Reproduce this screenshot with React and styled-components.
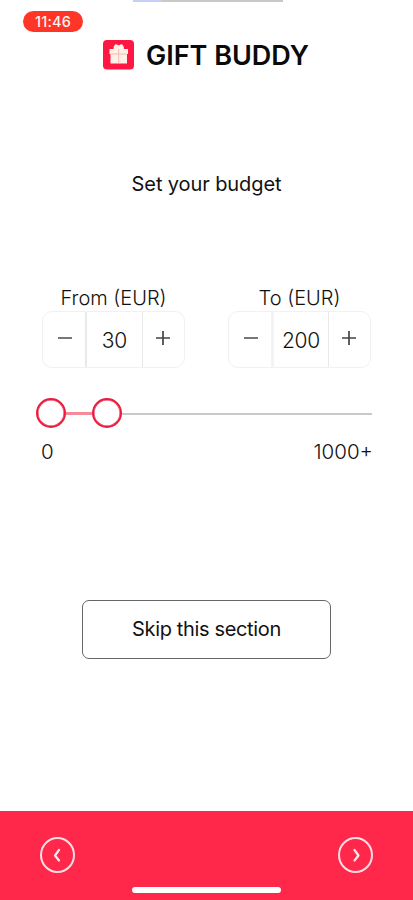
import React, { useState } from "react";
import styled, { createGlobalStyle } from "styled-components";

const App = () => {
  const [from, setFrom] = useState(30);
  const [to, setTo] = useState(200);

  return (
    <>
      <GlobalStyle />
      <Page>
        <LoadingBar><LoadingDone /></LoadingBar>
        <StatusBar>
          <Clock>11:46</Clock>
        </StatusBar>

        <Header>
          <GiftLogo />
          <Brand>GIFT BUDDY</Brand>
        </Header>

        <Question>Set your budget</Question>

        <Fields>
          <Stepper label="From (EUR)" value={from} onChange={setFrom} />
          <Stepper label="To (EUR)" value={to} onChange={setTo} thick />
        </Fields>

        {/* budget range */}
        <Range>
          <Thumb aria-label="minimum" />
          <Selected />
          <Thumb aria-label="maximum" />
          <Track />
        </Range>
        <Limits>
          <span>0</span>
          <span>1000+</span>
        </Limits>

        <SkipButton>Skip this section</SkipButton>

        <Footer>
          <NavRow>
            <NavButton aria-label="back">
              <Arrow d="M10 4L6 9.5L10 14.5" />
            </NavButton>
            <NavButton aria-label="next">
              <Arrow d="M7.5 4L11.5 9.5L7.5 14.5" />
            </NavButton>
          </NavRow>
          <HomeBar />
        </Footer>
      </Page>
    </>
  );
};

export default App;

const Stepper = ({ label, value, onChange, thick }) => (
  <Field>
    <FieldLabel>{label}</FieldLabel>
    <StepperBox>
      <StepButton aria-label="decrease" onClick={() => onChange(value - 10)}>
        <svg width="14" height="14" viewBox="0 0 14 14">
          <path d="M0 7H14" stroke="#777" strokeWidth="2" />
        </svg>
      </StepButton>
      <Value $thick={thick}>{value}</Value>
      <StepButton aria-label="increase" onClick={() => onChange(value + 10)}>
        <svg width="14" height="14" viewBox="0 0 14 14">
          <path d="M0 7H14M7 0V14" stroke="#444" strokeWidth="1.7" />
        </svg>
      </StepButton>
    </StepperBox>
  </Field>
);

const GiftLogo = () => (
  <svg width="31" height="30" viewBox="0 0 31 30">
    <rect width="31" height="29.5" rx="4" fill="#ff1744" />
    <path d="M6.5 9H25V14H24V23.5H7.5V14H6.5Z" fill="#fff0e8" />
    <path
      d="M10.5 9C10.5 6.5 11.5 4.2 13 4.2C14.3 4.2 14.7 5.3 15.7 5.3C16.7 5.3 17.2 4.2 18.5 4.2C20 4.2 21 6.5 21 9Z"
      fill="#fff0e8"
    />
    <path d="M15.7 9V23.5M7.5 14H24" stroke="#fab8b0" strokeWidth="1" />
  </svg>
);

const Arrow = ({ d }) => (
  <svg width="17" height="18" viewBox="0 0 17 18" fill="none">
    <path d={d} stroke="#ffe9ed" strokeWidth="2.2" strokeLinecap="round" strokeLinejoin="round" />
  </svg>
);

const GlobalStyle = createGlobalStyle`
  * {
    box-sizing: border-box;
  }
  body {
    margin: 0;
    background: #fff;
    color: #111;
    font-family: Inter, "Liberation Sans", sans-serif;
  }
  button {
    padding: 0;
    font: inherit;
    color: inherit;
    background: none;
    border: none;
  }
  svg {
    display: block;
  }
`

const Page = styled.div`
  display: flex;
  flex-direction: column;
  height: 900px;
  overflow: hidden;
`

const LoadingBar = styled.div`
  flex: none;
  width: 150px;
  height: 2px;
  margin-left: 133px;
  background: #c8c8c8;
`

const LoadingDone = styled.div`
  width: 29px;
  height: 2px;
  background: #c5cef5;
`

const StatusBar = styled.div`
  height: 38px;
  padding: 9px 0 0 23px;
`

const Clock = styled.div`
  width: 60px;
  height: 21px;
  border-radius: 11px;
  background: #ff3527;
  color: #fff4f0;
  font-size: 14.5px;
  font-weight: 500;
  line-height: 22px;
  letter-spacing: 0.2px;
  text-align: center;
`

const Header = styled.header`
  display: flex;
  gap: 12px;
  height: 30px;
  padding-left: 103px;
`

const Brand = styled.h1`
  margin: 0;
  font-size: 27px;
  font-weight: 600;
  line-height: 32px;
  white-space: nowrap;
  color: #0a0a0a;
`

const Question = styled.div`
  margin-top: 102px;
  height: 24px;
  font-size: 20px;
  line-height: 25px;
  letter-spacing: -0.1px;
  text-align: center;
`

const Fields = styled.div`
  display: flex;
  justify-content: space-between;
  margin-top: 91px;
  padding: 0 42px;
`

const Field = styled.div`
  width: 143px;
`

const FieldLabel = styled.div`
  height: 24px;
  font-size: 20px;
  font-weight: 300;
  line-height: 23px;
  text-align: center;
`

const StepperBox = styled.div`
  display: grid;
  grid-template-columns: 42px 58px 1fr;
  grid-template-rows: 55px;
  height: 57px;
  border: 1px solid #f1f1f1;
  border-radius: 10px;
`

const StepButton = styled.button`
  display: flex;
  align-items: center;
  justify-content: center;
  padding: 0 0 3px 2px;

  &:last-child {
    padding: 0 2px 3px 0;
  }
`

const Value = styled.div`
  height: 55px;
  border-left: ${(props) => (props.$thick ? "3px solid #f3f3f3" : "2px solid #e9e9e9")};
  border-right: 1px solid #e9e9e9;
  font-size: 21px;
  font-weight: 300;
  line-height: 58px;
  letter-spacing: -0.2px;
  text-align: center;
`

const Range = styled.div`
  display: flex;
  align-items: center;
  height: 30px;
  margin: 30px 41px 0 36px;
`

const Thumb = styled.button`
  flex: none;
  width: 30px;
  height: 30px;
  border: 2px solid #e91c40;
  border-radius: 50%;
  background: #fff;
  box-shadow: inset 0 0 0 0.5px #e91c40;
`

const Selected = styled.div`
  width: 26px;
  height: 3px;
  background: #f58b9a;
`

const Track = styled.div`
  flex: 1;
  height: 2px;
  margin-top: 1px;
  background: #c9c9c9;
`

const Limits = styled.div`
  display: flex;
  justify-content: space-between;
  margin-top: 12px;
  padding: 0 40px 0 41px;
  font-size: 20.5px;
  font-weight: 300;
  line-height: 24px;
`

const SkipButton = styled.button`
  flex: none;
  width: 249px;
  height: 59px;
  margin: 136px 0 0 82px;
  padding-bottom: 1px;
  border: 1px solid #666;
  border-radius: 7px;
  font-size: 20px;
  letter-spacing: -0.35px;
`

const Footer = styled.footer`
  height: 89px;
  margin-top: auto;
  padding-top: 26px;
  background: #ff284b;
`

const NavRow = styled.div`
  display: flex;
  justify-content: space-between;
  padding: 0 40px;
`

const NavButton = styled.button`
  display: flex;
  align-items: center;
  justify-content: center;
  width: 35px;
  height: 36px;
  border: 2px solid #ffdfe5;
  border-radius: 50%;
`

const HomeBar = styled.div`
  width: 149px;
  height: 6px;
  margin: 14px auto 0;
  border-radius: 3px;
  background: #fff;
`
